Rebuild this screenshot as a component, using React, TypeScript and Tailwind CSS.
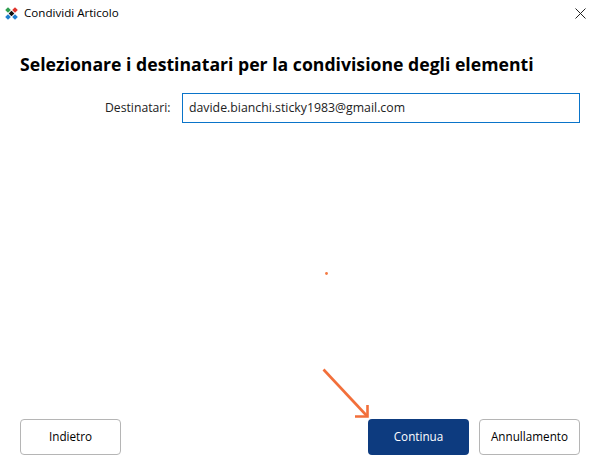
export default function App() {
  const font = { fontFamily: '"Open Sans", "Noto Sans", sans-serif' };
  return (
    <div className="relative flex h-[474px] w-[600px] flex-col overflow-hidden bg-white text-black" style={font}>
      <div className="flex h-[26px] items-center pl-[5px] pr-[14px]">
        <svg width="13" height="13" viewBox="0 0 13 13" className="mr-[6px]">
          <rect x="1" y="1" width="4" height="4" transform="rotate(45 3 3)" fill="#2e9e4f" />
          <rect x="8" y="1" width="4" height="4" transform="rotate(45 10 3)" fill="#e0342c" />
          <rect x="1" y="8" width="4" height="4" transform="rotate(45 3 10)" fill="#1f7fd0" />
          <rect x="8" y="8" width="4" height="4" transform="rotate(45 10 10)" fill="#1f7fd0" />
          <rect x="4.5" y="4.5" width="4" height="4" transform="rotate(45 6.5 6.5)" fill="#111" />
        </svg>
        <span className="text-[11.6px] leading-none">Condividi Articolo</span>
        <svg width="11" height="11" viewBox="0 0 11 11" className="ml-auto">
          <path d="M0.5 0.5 L10.5 10.5 M10.5 0.5 L0.5 10.5" stroke="#222" strokeWidth="1" fill="none" />
        </svg>
      </div>
      <h1 className="mt-[25px] pl-5 text-[17.65px] font-bold leading-[26px]">
        Selezionare i destinatari per la condivisione degli elementi
      </h1>
      <div className="mt-[16px] flex items-center pl-[105px] pr-5">
        <label className="w-[77px] text-[12.2px] text-[#222]">Destinatari:</label>
        <div className="flex h-[30px] flex-1 items-center border-[1.5px] border-[#0a74c9] pl-[6px] text-[12.3px] text-[#222]">
          davide.bianchi.sticky1983@gmail.com
        </div>
      </div>
      <div className="mt-auto mb-[19px] flex items-center px-5 text-[11.7px]">
        <button className="h-9 w-[101px] rounded-[4px] border border-[#b5b5b5] bg-white">Indietro</button>
        <button className="ml-auto h-9 w-[101px] rounded-[4px] bg-[#0d3b7f] text-white">Continua</button>
        <button className="ml-[10px] h-9 w-[101px] rounded-[4px] border border-[#b5b5b5] bg-white">Annullamento</button>
      </div>
      <svg width="600" height="474" viewBox="0 0 600 474" className="pointer-events-none absolute left-0 top-0">
        <circle cx="326.5" cy="273.5" r="1.4" fill="#f47a42" />
        <path d="M323.5 369.5 L367 416" stroke="#f26f3a" strokeWidth="2.6" fill="none" />
        <path d="M367.5 405 L367.5 416.5 L355 416.5" stroke="#f26f3a" strokeWidth="2.6" fill="none" />
      </svg>
    </div>
  );
}
